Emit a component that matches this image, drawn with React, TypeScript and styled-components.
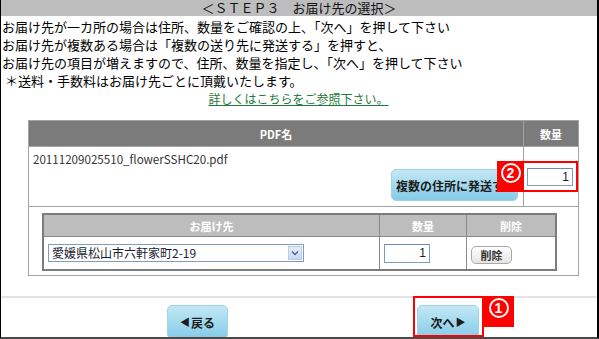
import styled, { createGlobalStyle } from 'styled-components';

const GlobalStyle = createGlobalStyle`
  html, body {
    margin: 0;
    padding: 0;
    background: #ffffff;
  }
  body {
    font-family: "Noto Sans CJK JP", "DejaVu Sans", sans-serif;
    color: #000000;
  }
`;

const Frame = styled.div`
  position: relative;
  width: 599px;
  height: 339px;
  box-sizing: border-box;
  border-left: 1px solid #000000;
  border-right: 2px solid #000000;
  border-bottom: 2px solid #4a4a4a;
  display: flex;
  flex-direction: column;
  overflow: hidden;
`;

const TitleBar = styled.div`
  height: 16px;
  line-height: 16px;
  background: #bdbdbd;
  text-align: center;
  font-size: 13px;
  color: #111111;
  white-space: nowrap;
`;

const Intro = styled.div`
  margin-top: 2px;
  padding-left: 1px;
  font-size: 13px;
  line-height: 18px;
  color: #000000;
`;

const Line = styled.div`
  white-space: nowrap;
`;

const HelpLink = styled.a`
  display: block;
  text-align: center;
  font-size: 12px;
  line-height: 18px;
  color: #1f7a3a;
  text-decoration: underline;
  padding-right: 2px;
`;

const OuterTable = styled.table`
  margin: 12px 0 0 27px;
  width: 551px;
  border-collapse: collapse;
  border: 1px solid #a3a3a3;
  table-layout: fixed;
`;

const DarkHead = styled.th<{ $w?: number }>`
  width: ${(p) => (p.$w ? `${p.$w}px` : 'auto')};
  height: 25px;
  padding: 0;
  background: #7b7b7b;
  color: #ffffff;
  font-size: 11px;
  font-weight: 700;
  text-align: center;
  border: 1px solid #a3a3a3;
`;

const FileCell = styled.td`
  padding: 5px 5px 5px 4px;
  vertical-align: top;
  border: 1px solid #a3a3a3;
`;

const FileName = styled.div`
  font-size: 11.6px;
  line-height: 15px;
  color: #333333;
`;

const ButtonRow = styled.div`
  display: flex;
  justify-content: flex-end;
  margin-top: 2px;
`;

const BlueButton = styled.button<{ $w: number; $h: number }>`
  width: ${(p) => p.$w}px;
  height: ${(p) => p.$h}px;
  padding: 0;
  border: 1px solid #9fd3e8;
  border-radius: 5px;
  background: linear-gradient(#c4e8f6 0%, #a6dbef 45%, #86cbe8 100%);
  color: #1c1c1c;
  font-family: inherit;
  font-size: 12px;
  font-weight: 700;
  display: flex;
  align-items: center;
  justify-content: center;
  gap: 1px;
  white-space: nowrap;
  overflow: hidden;
  cursor: pointer;
`;

const WideLabel = styled.span`
  padding-left: 4px;
  align-self: center;
  text-align: left;
  width: 100%;
`;

const QtyCell = styled.td`
  padding: 0 0 0 3px;
  vertical-align: middle;
  border: 1px solid #a3a3a3;
`;

const QtyInput = styled.input<{ $w: number; $h: number }>`
  box-sizing: border-box;
  width: ${(p) => p.$w}px;
  height: ${(p) => p.$h}px;
  padding: 0 3px 0 0;
  border: 1px solid #7f9db9;
  border-top-color: #6e8aa6;
  text-align: right;
  font-family: "Liberation Sans", Arial, sans-serif;
  font-size: 12px;
  color: #1a1a1a;
  background: #ffffff;
  display: block;
`;

const NestCell = styled.td`
  padding: 6px 0 4px 13px;
  border: 1px solid #a3a3a3;
`;

const InnerTable = styled.table`
  width: 509px;
  border-collapse: collapse;
  border: 2px solid #7c7c7c;
  table-layout: fixed;
`;

const LightHead = styled.th<{ $w: number }>`
  width: ${(p) => p.$w}px;
  height: 21px;
  padding: 0;
  background: #bdbdbd;
  color: #ffffff;
  font-size: 11px;
  font-weight: 700;
  text-align: center;
  border: 1px solid #8a8a8a;
`;

const InnerCell = styled.td<{ $pl: number }>`
  height: 32px;
  padding: 0 0 0 ${(p) => p.$pl}px;
  vertical-align: middle;
  border: 1px solid #8a8a8a;
`;

const SelectBox = styled.div`
  box-sizing: border-box;
  width: 256px;
  height: 18px;
  border: 1px solid #7f9db9;
  display: flex;
  align-items: center;
  background: #ffffff;
`;

const SelectText = styled.span`
  flex: 1;
  padding-left: 3px;
  font-size: 12px;
  line-height: 16px;
  color: #1a1a2e;
  white-space: nowrap;
`;

const SelectArrow = styled.span`
  width: 14px;
  height: 14px;
  margin-right: 1px;
  border: 1px solid #b7cde8;
  box-sizing: border-box;
  background: linear-gradient(#e4eefb, #c6d8f2);
  display: flex;
  align-items: center;
  justify-content: center;
`;

const GrayButton = styled.button`
  box-sizing: border-box;
  width: 41px;
  height: 18px;
  padding: 0;
  border: 1px solid #a8a8a8;
  border-radius: 5px;
  background: linear-gradient(#ffffff, #e4e4e4);
  font-family: inherit;
  font-size: 11px;
  font-weight: 700;
  color: #333333;
  line-height: 16px;
  cursor: pointer;
`;

const Separator = styled.div`
  margin-top: 20px;
  border-top: 2px solid #e3e3e3;
`;

const NavRow = styled.div`
  display: flex;
  gap: 189px;
  padding: 7px 0 0 166px;
`;

const Arrow = styled.span`
  font-size: 10px;
  line-height: 1;
`;

const Marker = styled.div<{ $x: number; $y: number; $w: number; $h: number }>`
  position: absolute;
  left: ${(p) => p.$x}px;
  top: ${(p) => p.$y}px;
  width: ${(p) => p.$w}px;
  height: ${(p) => p.$h}px;
  box-sizing: border-box;
  border: 2px solid #ff0000;
  pointer-events: none;
`;

const MarkerTag = styled.div<{ $x: number; $y: number; $w: number; $h: number }>`
  position: absolute;
  left: ${(p) => p.$x}px;
  top: ${(p) => p.$y}px;
  width: ${(p) => p.$w}px;
  height: ${(p) => p.$h}px;
  background: #ff0000;
  display: flex;
  justify-content: center;
  align-items: flex-start;
  padding-top: 2px;
  box-sizing: border-box;
`;

// circled step number, drawn as a ring with the digit inside
const Num = styled.span`
  box-sizing: border-box;
  width: 20px;
  height: 20px;
  border: 2px solid #ffffff;
  border-radius: 50%;
  color: #ffffff;
  font-family: "Liberation Sans", Arial, sans-serif;
  font-size: 14px;
  font-weight: 700;
  line-height: 16px;
  text-align: center;
`;

function Chevron() {
  return (
    <svg width="8" height="6" viewBox="0 0 8 6">
      <path d="M1 1.5 L4 4.5 L7 1.5" fill="none" stroke="#4d6185" strokeWidth="1.4" />
    </svg>
  );
}

export default function App() {
  return (
    <>
      <GlobalStyle />
      <Frame>
        <TitleBar>＜ＳＴＥＰ３　お届け先の選択＞</TitleBar>
        <Intro>
          <Line>お届け先が一カ所の場合は住所、数量をご確認の上、「次へ」を押して下さい</Line>
          <Line>お届け先が複数ある場合は「複数の送り先に発送する」を押すと、</Line>
          <Line>お届け先の項目が増えますので、住所、数量を指定し、「次へ」を押して下さい</Line>
          <Line>&nbsp;＊送料・手数料はお届け先ごとに頂戴いたします。</Line>
          <HelpLink>詳しくはこちらをご参照下さい。</HelpLink>
        </Intro>

        <OuterTable>
          <thead>
            <tr>
              <DarkHead>PDF名</DarkHead>
              <DarkHead $w={54}>数量</DarkHead>
            </tr>
          </thead>
          <tbody>
            <tr>
              <FileCell>
                <FileName>20111209025510_flowerSSHC20.pdf</FileName>
                <ButtonRow>
                  <BlueButton $w={127} $h={32}>
                    <WideLabel>複数の住所に発送する</WideLabel>
                  </BlueButton>
                </ButtonRow>
              </FileCell>
              <QtyCell>
                <QtyInput $w={46} $h={18} defaultValue="1" />
              </QtyCell>
            </tr>
            <tr>
              <NestCell colSpan={2}>
                <InnerTable>
                  <thead>
                    <tr>
                      <LightHead $w={335}>お届け先</LightHead>
                      <LightHead $w={86}>数量</LightHead>
                      <LightHead $w={88}>削除</LightHead>
                    </tr>
                  </thead>
                  <tbody>
                    <tr>
                      <InnerCell $pl={4}>
                        <SelectBox>
                          <SelectText>愛媛県松山市六軒家町2-19</SelectText>
                          <SelectArrow>
                            <Chevron />
                          </SelectArrow>
                        </SelectBox>
                      </InnerCell>
                      <InnerCell $pl={4}>
                        <QtyInput $w={46} $h={19} defaultValue="1" />
                      </InnerCell>
                      <InnerCell $pl={4}>
                        <GrayButton>削除</GrayButton>
                      </InnerCell>
                    </tr>
                  </tbody>
                </InnerTable>
              </NestCell>
            </tr>
          </tbody>
        </OuterTable>

        <Separator />
        <NavRow>
          <BlueButton $w={61} $h={34}>
            <Arrow>◀</Arrow>戻る
          </BlueButton>
          <BlueButton $w={62} $h={34}>
            次へ<Arrow>▶</Arrow>
          </BlueButton>
        </NavRow>

        <Marker $x={496} $y={161} $w={81} $h={31} />
        <MarkerTag $x={496} $y={161} $w={27} $h={31}>
          <Num>2</Num>
        </MarkerTag>
        <Marker $x={412} $y={296} $w={71} $h={41} />
        <MarkerTag $x={482} $y={296} $w={31} $h={31}>
          <Num>1</Num>
        </MarkerTag>
      </Frame>
    </>
  );
}
